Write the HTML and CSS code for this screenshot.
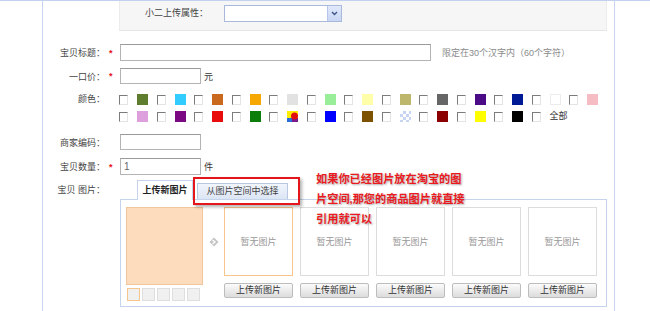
FILE: index.html
```html
<!DOCTYPE html>
<html>
<head>
  <title>发布宝贝</title>
  <link rel="stylesheet" href="styles.css">
</head>
<body>
  <div class="page">
    <div class="sheet">
      <div class="attr-panel">
        <span class="attr-label">小二上传属性：</span>
        <span class="select">
          <span class="select-arrow">
            <svg width="9" height="9" viewBox="0 0 9 9"><path d="M2 3 L4.5 5.5 L7 3" fill="none" stroke="#3d5588" stroke-width="1.4"/></svg>
          </span>
        </span>
      </div>

      <div class="row row-title">
        <span class="label">宝贝标题：</span><span class="star">*</span>
        <input class="input input-long" type="text">
        <span class="hint">限定在30个汉字内（60个字符）</span>
      </div>

      <div class="row row-price">
        <span class="label">一口价：</span><span class="star">*</span>
        <input class="input input-short" type="text">
        <span class="unit">元</span>
      </div>

      <div class="row row-colors">
        <span class="label">颜色：</span><span class="star"></span>
        <div class="colors">
          <div class="color-line">
            <span class="cb"></span><span class="sw" style="background:#5e7d2e"></span>
            <span class="cb"></span><span class="sw" style="background:#33ccff"></span>
            <span class="cb"></span><span class="sw" style="background:#c8691e"></span>
            <span class="cb"></span><span class="sw" style="background:#f7a800"></span>
            <span class="cb"></span><span class="sw" style="background:#e2e2e2"></span>
            <span class="cb"></span><span class="sw" style="background:#99ee99"></span>
            <span class="cb"></span><span class="sw" style="background:#ffffaa"></span>
            <span class="cb"></span><span class="sw" style="background:#bdb76b"></span>
            <span class="cb"></span><span class="sw" style="background:#666666"></span>
            <span class="cb"></span><span class="sw" style="background:#4b0a86"></span>
            <span class="cb"></span><span class="sw" style="background:#001a96"></span>
            <span class="cb"></span><span class="sw sw-white"></span>
            <span class="cb"></span><span class="sw" style="background:#f6bcc4"></span>
          </div>
          <div class="color-line">
            <span class="cb"></span><span class="sw" style="background:#dda0dd"></span>
            <span class="cb"></span><span class="sw" style="background:#7b0a82"></span>
            <span class="cb"></span><span class="sw" style="background:#e80c0c"></span>
            <span class="cb"></span><span class="sw" style="background:#0a7d0a"></span>
            <span class="cb"></span><span class="sw sw-multi">
              <svg width="11" height="11" viewBox="0 0 11 11">
                <rect width="11" height="11" fill="#ffee00"/>
                <rect x="0" y="7" width="5" height="4" fill="#2a6cd8"/>
                <rect x="5" y="7" width="6" height="4" fill="#7a1a8c"/>
                <circle cx="7.5" cy="5" r="3.5" fill="#e01010"/>
              </svg>
            </span>
            <span class="cb"></span><span class="sw" style="background:#0000ff"></span>
            <span class="cb"></span><span class="sw" style="background:#7c5200"></span>
            <span class="cb"></span><span class="sw sw-clear"></span>
            <span class="cb"></span><span class="sw" style="background:#8b0000"></span>
            <span class="cb"></span><span class="sw" style="background:#ffff00"></span>
            <span class="cb"></span><span class="sw" style="background:#000000"></span>
            <span class="cb"></span><span class="all">全部</span>
          </div>
        </div>
      </div>

      <div class="row row-code">
        <span class="label">商家编码：</span><span class="star"></span>
        <input class="input input-short" type="text">
      </div>

      <div class="row row-qty">
        <span class="label">宝贝数量：</span><span class="star">*</span>
        <input class="input input-short input-tall" type="text" value="1">
        <span class="unit">件</span>
      </div>

      <div class="row row-images">
        <span class="label">宝贝 图片：</span><span class="star"></span>
        <div class="uploader">
          <div class="tabs">
            <span class="tab tab-active">上传新图片</span>
            <span class="tab tab-other">从图片空间中选择</span>
          </div>
          <div class="tab-body">
            <div class="preview">
              <div class="preview-big"></div>
              <div class="thumbs">
                <span class="thumb thumb-on"></span>
                <span class="thumb"></span>
                <span class="thumb"></span>
                <span class="thumb"></span>
                <span class="thumb"></span>
              </div>
            </div>
            <div class="pointer">
              <svg width="10" height="10" viewBox="0 0 10 10">
                <path d="M5 0.5 L9.5 5 L5 9.5 L0.5 5 Z" fill="#c4c4c4"/>
                <path d="M3.5 3 L6 5 L3.5 7" fill="none" stroke="#fff" stroke-width="1.4"/>
              </svg>
            </div>
            <div class="slots">
              <div class="slot">
                <div class="slot-box slot-on">暂无图片</div>
                <span class="btn">上传新图片</span>
              </div>
              <div class="slot">
                <div class="slot-box">暂无图片</div>
                <span class="btn">上传新图片</span>
              </div>
              <div class="slot">
                <div class="slot-box">暂无图片</div>
                <span class="btn">上传新图片</span>
              </div>
              <div class="slot">
                <div class="slot-box">暂无图片</div>
                <span class="btn">上传新图片</span>
              </div>
              <div class="slot">
                <div class="slot-box">暂无图片</div>
                <span class="btn">上传新图片</span>
              </div>
            </div>
          </div>
        </div>
        <div class="mark"></div>
        <div class="note">如果你已经图片放在淘宝的图<br>片空间,那您的商品图片就直接<br>引用就可以</div>
      </div>
    </div>
  </div>
</body>
</html>
```

FILE: styles.css
```css
body {
  margin: 0;
  padding: 0;
  background: #fff;
  font-family: "Liberation Sans", "Noto Sans CJK SC", sans-serif;
  font-size: 9px;
  color: #333;
}
.page {
  border-top: 1px solid #c3d1ee;
  height: 310px;
  overflow: hidden;
}
.sheet {
  margin-left: 42px;
  width: 571px;
  height: 310px;
  border-left: 1px solid #c9d6f0;
  border-right: 1px solid #c9d6f0;
}
.attr-panel {
  display: flex;
  align-items: flex-start;
  margin-left: 76px;
  width: 486px;
  height: 25px;
  padding-top: 4px;
  background: #f6f6f6;
  border-left: 1px solid #ececec;
  border-right: 1px solid #ececec;
  border-bottom: 1px solid #e6e6e6;
}
.attr-label {
  width: 88px;
  line-height: 17px;
  text-align: right;
  color: #444;
}
.select {
  display: flex;
  justify-content: flex-end;
  box-sizing: border-box;
  margin-left: 16px;
  width: 118px;
  height: 17px;
  background: #fff;
  border: 1px solid #a9b9dc;
}
.select-arrow {
  display: flex;
  align-items: center;
  justify-content: center;
  width: 13px;
  height: 15px;
  background: linear-gradient(#e1e9fb, #c8d6f4);
  border-left: 1px solid #b6c6ea;
}
.row {
  display: flex;
  align-items: center;
}
.label {
  width: 62px;
  text-align: right;
  white-space: nowrap;
  color: #444;
}
.star {
  width: 11px;
  padding-left: 4px;
  color: #e4141a;
  font-size: 9px;
  font-weight: bold;
}
.input {
  box-sizing: border-box;
  margin: 0;
  padding: 0 3px;
  height: 16px;
  border: 1px solid #b4b4b4;
  border-top-color: #9a9a9a;
  background: #fff;
  font-family: "Liberation Sans", "Noto Sans CJK SC", sans-serif;
  font-size: 10px;
  color: #666;
  outline: none;
}
.input-long {
  width: 311px;
  height: 17px;
}
.input-short {
  width: 81px;
}
.input-tall {
  height: 17px;
}
.hint {
  margin-left: 11px;
  color: #8a8a8a;
}
.unit {
  margin-left: 3px;
}
.row-title {
  margin-top: 13px;
  height: 17px;
}
.row-price {
  margin-top: 7px;
  height: 16px;
}
.row-colors {
  margin-top: 7px;
  align-items: flex-start;
}
.row-colors .label {
  line-height: 17px;
}
.colors {
  margin-left: -1px;
}
.color-line {
  display: flex;
  align-items: center;
  height: 17px;
}
.cb {
  box-sizing: border-box;
  width: 9px;
  height: 10px;
  margin-right: 9px;
  border-top: 1px solid #7c7c7c;
  border-left: 1px solid #7c7c7c;
  border-right: 1px solid #e4e4e4;
  border-bottom: 1px solid #e4e4e4;
  background: #fff;
}
.sw {
  display: block;
  width: 11px;
  height: 11px;
  margin-right: 8.5px;
}
.sw-white {
  box-sizing: border-box;
  background: #fff;
  border: 1px solid #ececec;
}
.sw-multi svg {
  display: block;
}
.sw-clear {
  background-color: #fff;
  background-image: conic-gradient(#c6d6f2 25%, #fff 0 50%, #c6d6f2 0 75%, #fff 0);
  background-size: 6px 6px;
}
.all {
  line-height: 17px;
}
.row-code {
  margin-top: 9px;
  height: 16px;
}
.row-qty {
  margin-top: 8px;
  height: 17px;
}
.row-images {
  position: relative;
  margin-top: 5px;
  align-items: flex-start;
}
.row-images .label {
  line-height: 20px;
}
.uploader {
  width: 487px;
}
.tabs {
  display: flex;
  align-items: flex-end;
  height: 19px;
  padding-left: 17px;
}
.tab {
  box-sizing: border-box;
  text-align: center;
  white-space: nowrap;
}
.tab-active {
  position: relative;
  z-index: 1;
  width: 56px;
  height: 20px;
  margin-bottom: -1px;
  line-height: 19px;
  background: #fff;
  border: 1px solid #c6d3ec;
  border-bottom: none;
  font-weight: bold;
  color: #222;
}
.tab-other {
  width: 91px;
  height: 16px;
  margin-left: 4px;
  line-height: 14px;
  background: linear-gradient(#f1f5fc, #dce5f4);
  border: 1px solid #b9c8e2;
  border-bottom: none;
  color: #444;
}
.tab-body {
  box-sizing: border-box;
  display: flex;
  align-items: flex-start;
  height: 108px;
  padding: 7px 0 0 5px;
  border: 1px solid #c6d3ec;
}
.preview-big {
  box-sizing: border-box;
  width: 77px;
  height: 78px;
  background: #fcdcbd;
  border: 1px solid #f2c69c;
}
.thumbs {
  display: flex;
  gap: 2px;
  margin-top: 3px;
  margin-left: 1px;
}
.thumb {
  box-sizing: border-box;
  width: 13px;
  height: 13px;
  background: #f0f0f0;
  border: 1px solid #dedede;
}
.thumb-on {
  border-color: #f6c48e;
}
.pointer {
  display: flex;
  justify-content: center;
  width: 21px;
  padding-top: 30px;
}
.slots {
  display: flex;
  gap: 7px;
}
.slot {
  display: flex;
  flex-direction: column;
  width: 69px;
}
.slot-box {
  box-sizing: border-box;
  display: flex;
  align-items: center;
  justify-content: center;
  height: 69px;
  border: 1px solid #dcdcdc;
  color: #999;
}
.slot-on {
  border-color: #f8c58c;
}
.btn {
  box-sizing: border-box;
  margin-top: 7px;
  height: 15px;
  line-height: 13px;
  text-align: center;
  background: linear-gradient(#fbfbfb, #dcdcdc);
  border: 1px solid #bdbdbd;
  border-radius: 2px;
  color: #333;
}
.mark {
  position: absolute;
  left: 150px;
  top: -3px;
  width: 103px;
  height: 24px;
  border: 2px solid #e4161c;
  box-shadow: 2px 2px 3px rgba(0, 0, 0, 0.3);
}
.note {
  position: absolute;
  left: 273px;
  top: -11px;
  line-height: 20px;
  white-space: nowrap;
  font-size: 11.2px;
  font-weight: bold;
  color: #ea1a1f;
  text-shadow: 1px 1px 2px rgba(0, 0, 0, 0.35);
}
```
